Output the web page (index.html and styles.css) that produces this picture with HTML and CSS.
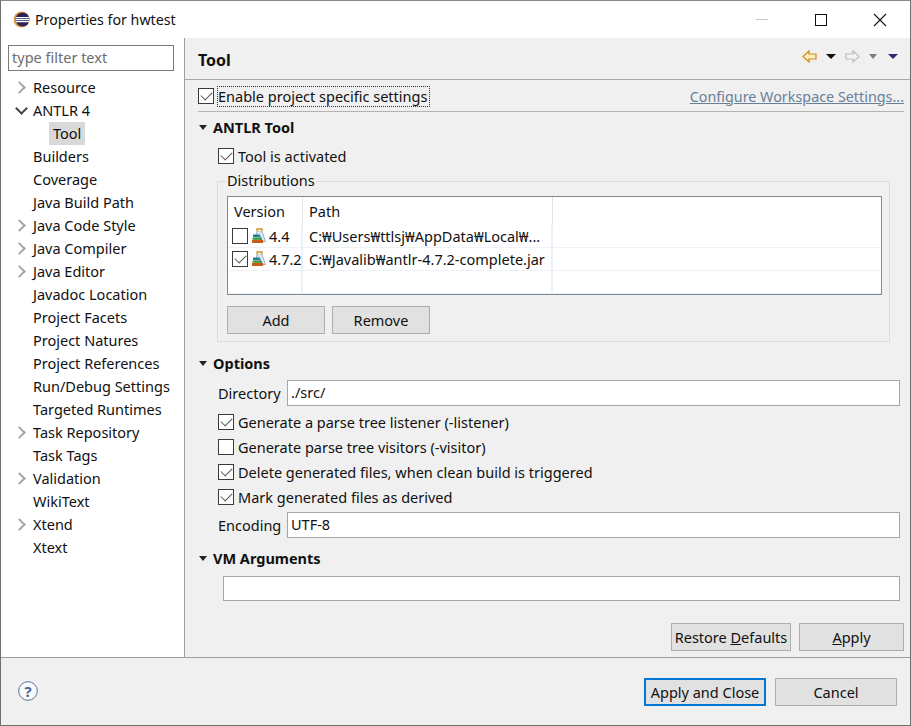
FILE: index.html
```html
<!DOCTYPE html>
<html lang="ko">
<head>
    <meta charset="UTF-8">
    <title>Properties for hwtest</title>
    <link rel="stylesheet" href="styles.css">
</head>
<body>
<div class="window">
    <!-- Title bar -->
    <div class="titlebar">
        <svg class="app-icon" width="17" height="17" viewBox="0 0 17 17">
            <circle cx="8.5" cy="8.5" r="8" fill="#e8a04c"/>
            <circle cx="9.5" cy="8.5" r="7" fill="#2c2658"/>
            <path d="M3 6.6h13M2.6 8.6h14M3 10.6h13" stroke="#fff" stroke-width="1.2"/>
        </svg>
        <span class="title-text">Properties for hwtest</span>
        <div class="win-controls">
            <span class="win-min"></span>
            <span class="win-max"></span>
            <svg class="win-close" width="14" height="14" viewBox="0 0 14 14">
                <path d="M1 1l12 12M13 1L1 13" stroke="#111" stroke-width="1.1"/>
            </svg>
        </div>
    </div>

    <div class="main">
        <!-- Left tree -->
        <aside class="sidebar">
            <div class="filter">type filter text</div>
            <ul class="tree">
                <li class="node closed">Resource</li>
                <li class="node open">ANTLR 4</li>
                <li class="child"><span class="selected">Tool</span></li>
                <li class="node">Builders</li>
                <li class="node">Coverage</li>
                <li class="node">Java Build Path</li>
                <li class="node closed">Java Code Style</li>
                <li class="node closed">Java Compiler</li>
                <li class="node closed">Java Editor</li>
                <li class="node">Javadoc Location</li>
                <li class="node">Project Facets</li>
                <li class="node">Project Natures</li>
                <li class="node">Project References</li>
                <li class="node">Run/Debug Settings</li>
                <li class="node">Targeted Runtimes</li>
                <li class="node closed">Task Repository</li>
                <li class="node">Task Tags</li>
                <li class="node closed">Validation</li>
                <li class="node">WikiText</li>
                <li class="node closed">Xtend</li>
                <li class="node">Xtext</li>
            </ul>
        </aside>

        <!-- Right page -->
        <section class="page">
            <div class="page-head">
                <h1>Tool</h1>
                <div class="nav-icons">
                    <svg width="15" height="13" viewBox="0 0 15 13"><path d="M7 1L1 6.500L7 12V9h7V4H7z" fill="#ffeeb8" stroke="#cf8a1e" stroke-width="1.200"/></svg>
                    <span class="tri"></span>
                    <svg class="nav-fwd" width="15" height="13" viewBox="0 0 15 13"><path d="M8 1l6 5.500L8 12V9H1V4h7z" fill="#f4f4f4" stroke="#bdbdbd" stroke-width="1.200"/></svg>
                    <span class="tri grey"></span>
                    <span class="tri purple"></span>
                </div>
            </div>

            <div class="project-row">
                <label class="check checked"><span class="box"></span><span class="focus">Enable project specific settings</span></label>
                <a class="link">Configure Workspace Settings...</a>
            </div>

            <div class="section-title first">ANTLR Tool</div>
            <div class="indent">
                <label class="check checked activated"><span class="box"></span>Tool is activated</label>
                <fieldset class="group">
                    <legend>Distributions</legend>
                    <div class="table">
                        <div class="cell head">Version</div>
                        <div class="cell head">Path</div>
                        <div class="cell head"></div>

                        <div class="cell ver"><span class="box"></span><svg class="lib-icon" width="15" height="16" viewBox="0 0 15 16"><use href="#books"/></svg>4.4</div>
                        <div class="cell">C:₩Users₩ttlsj₩AppData₩Local₩...</div>
                        <div class="cell"></div>

                        <div class="cell ver checked"><span class="box"></span><svg class="lib-icon" width="15" height="16" viewBox="0 0 15 16"><use href="#books"/></svg>4.7.2</div>
                        <div class="cell">C:₩Javalib₩antlr-4.7.2-complete.jar</div>
                        <div class="cell"></div>

                        <div class="cell"></div>
                        <div class="cell"></div>
                        <div class="cell"></div>
                    </div>
                    <div class="table-buttons">
                        <button class="btn">Add</button>
                        <button class="btn">Remove</button>
                    </div>
                </fieldset>
            </div>

            <div class="section-title options">Options</div>
            <div class="indent">
                <div class="field-row"><span class="field-label">Directory</span><div class="input">./src/</div></div>
                <label class="check checked opt"><span class="box"></span>Generate a parse tree listener (-listener)</label>
                <label class="check opt"><span class="box"></span>Generate parse tree visitors (-visitor)</label>
                <label class="check checked opt"><span class="box"></span>Delete generated files, when clean build is triggered</label>
                <label class="check checked opt"><span class="box"></span>Mark generated files as derived</label>
                <div class="field-row encoding"><span class="field-label">Encoding</span><div class="input">UTF-8</div></div>
            </div>

            <div class="section-title vm">VM Arguments</div>
            <div class="input vm-input"></div>

            <div class="page-buttons">
                <button class="btn restore">Restore <u>D</u>efaults</button>
                <button class="btn apply"><u>A</u>pply</button>
            </div>
        </section>
    </div>

    <!-- Bottom bar -->
    <div class="footer">
        <svg class="help" width="20" height="20" viewBox="0 0 20 20">
            <circle cx="10" cy="10" r="9.300" fill="#fafbfd" stroke="#5a7199"/>
            <text x="10" y="15.500" text-anchor="middle" class="help-mark">?</text>
        </svg>
        <div class="footer-buttons">
            <button class="btn default">Apply and Close</button>
            <button class="btn cancel">Cancel</button>
        </div>
    </div>
</div>

<!-- Library icon used in the table -->
<svg width="0" height="0" class="defs">
    <defs>
        <g id="books">
            <path d="M5 3.500h5l3.500 10H3z" fill="#dfeaf6" stroke="#8fa6bd" stroke-width=".9"/>
            <path d="M5 3.500V1h5v2.500" fill="#fff6dc" stroke="#c9952f" stroke-width="1.300"/>
            <path d="M7 5l4.500 9H8z" fill="#4f88c4"/>
            <rect x="1" y="6.500" width="6.500" height="2.500" fill="#1f7f95"/>
            <rect x="0.500" y="9.500" width="8.500" height="2.300" fill="#3f9a36"/>
            <rect x="0" y="12" width="11" height="3" fill="#c85c14"/>
        </g>
    </defs>
</svg>
</body>
</html>
```

FILE: styles.css
```css
* {
    box-sizing: border-box;
}

html, body {
    margin: 0;
    padding: 0;
}

body {
    font-family: "Noto Sans", sans-serif;
    font-size: 14.5px;
    color: #111;
    background: #f0f0f0;
}

.defs {
    position: absolute;
}

.window {
    width: 911px;
    height: 726px;
    border: 1px solid #707070;
    border-top-color: #8a8a8a;
    display: flex;
    flex-direction: column;
    overflow: hidden;
}

/* Title bar */
.titlebar {
    height: 37px;
    flex: none;
    background: #fff;
    display: flex;
    align-items: center;
    padding-left: 12px;
}

.app-icon {
    margin-right: 5px;
}

.title-text {
    font-size: 14.2px;
}

.win-controls {
    margin-left: auto;
    display: flex;
    align-items: center;
}

.win-min {
    width: 12px;
    height: 1px;
    background: #c8c8c8;
    margin-right: 47px;
}

.win-max {
    width: 12px;
    height: 12px;
    border: 1px solid #111;
    margin-right: 46px;
}

.win-close {
    margin-right: 23px;
}

.main {
    height: 620px;
    flex: none;
    display: flex;
    border-bottom: 1px solid #a0a0a0;
}

/* Left tree */
.sidebar {
    width: 184px;
    flex: none;
    background: #fff;
    border-right: 1px solid #a0a0a0;
    padding: 7px 0 0 7px;
}

.filter {
    width: 166px;
    height: 26px;
    border: 1px solid #7a7a7a;
    padding-left: 3px;
    line-height: 23px;
    color: #6d6d6d;
}

.tree {
    list-style: none;
    margin: 5px 0 0;
    padding: 0 0 0 25px;
}

.tree li {
    height: 23px;
    line-height: 23px;
    position: relative;
    white-space: nowrap;
}

.closed::before {
    content: "";
    position: absolute;
    left: -18px;
    top: 7px;
    width: 7px;
    height: 7px;
    border-top: 2px solid #a6a6a6;
    border-right: 2px solid #a6a6a6;
    transform: rotate(45deg);
}

.open::before {
    content: "";
    position: absolute;
    left: -16px;
    top: 5px;
    width: 7px;
    height: 7px;
    border-right: 2px solid #444;
    border-bottom: 2px solid #444;
    transform: rotate(45deg);
}

.child {
    padding-left: 16px;
}

.selected {
    display: inline-block;
    height: 23px;
    padding: 0 4px;
    background: #d9d9d9;
}

/* Right page */
.page {
    flex: 1;
    min-width: 0;
    padding-left: 13px;
    padding-right: 10px;
}

.page-head {
    height: 42px;
    margin-left: -13px;
    margin-right: -10px;
    padding: 3px 12px 0 13px;
    border-bottom: 1px solid #a8a8a8;
    display: flex;
    align-items: center;
    justify-content: space-between;
}

.page-head h1 {
    margin: 0;
    font-size: 16px;
    font-weight: 700;
}

.nav-icons {
    display: flex;
    align-items: center;
    margin-top: -7px;
}

.tri {
    width: 0;
    height: 0;
    margin-left: 9px;
    border-left: 5px solid transparent;
    border-right: 5px solid transparent;
    border-top: 5px solid #111;
}

.tri.grey {
    border-left-width: 4.500px;
    border-right-width: 4.500px;
    border-top-color: #7d7d7d;
}

.tri.purple {
    border-top-color: #3c2470;
    margin-left: 11px;
}

.nav-fwd {
    margin-left: 9px;
}

.project-row {
    height: 32px;
    padding-top: 1px;
    display: flex;
    align-items: center;
    justify-content: space-between;
    border-bottom: 1px solid #b4b4b4;
    margin-right: -4px;
}

.link {
    color: #6a7f98;
    font-size: 14.35px;
    text-decoration: underline;
}

.focus {
    outline: 1px dotted #333;
    line-height: 19px;
    padding-right: 2px;
}

/* Checkboxes */
.check {
    display: flex;
    align-items: center;
    white-space: nowrap;
}

.box {
    width: 16px;
    height: 16px;
    flex: none;
    border: 1px solid #3a3a3a;
    background: #fff;
    margin-right: 4px;
    position: relative;
}

.checked > .box::after {
    content: "";
    position: absolute;
    left: 2px;
    top: 2px;
    width: 10px;
    height: 6px;
    border-left: 1.500px solid #555;
    border-bottom: 1.500px solid #555;
    transform: rotate(-45deg) scale(.95);
}

/* Sections */
.section-title {
    font-weight: 700;
    height: 22px;
    line-height: 22px;
    padding-left: 15px;
    position: relative;
}

.section-title::before {
    content: "";
    position: absolute;
    left: 1px;
    top: 9px;
    width: 0;
    height: 0;
    border-left: 4.500px solid transparent;
    border-right: 4.500px solid transparent;
    border-top: 5px solid #222;
}

.section-title.first {
    margin-top: 4px;
}

.indent {
    padding-left: 20px;
}

.activated {
    height: 24px;
    margin-top: 6px;
}

/* Distributions group */
.group {
    margin: 3px 0 0 -1px;
    padding: 0 7px 8px 9px;
    height: 171px;
    width: 673px;
    border: 1px solid #dcdcdc;
    min-width: 0;
}

.group legend {
    padding: 0 1px;
    margin-left: -1px;
    height: 20px;
    line-height: 18px;
}

.table {
    margin-top: 5px;
    height: 99px;
    border: 1px solid #7f8a94;
    background: #fff;
    display: grid;
    grid-template-columns: 75px 250px 1fr;
    grid-template-rows: 28px 23px 23px 23px;
}

.cell {
    padding-left: 6px;
    display: flex;
    align-items: center;
    white-space: nowrap;
    overflow: hidden;
    border-right: 2px solid #e8f0f9;
    border-bottom: 1px solid #eef2f6;
}

.cell:nth-child(3n) {
    border-right: 0;
}

.head {
    border-bottom: 0;
    border-right: 1px solid #e2e2e2;
}

.ver {
    padding-left: 4px;
}

.ver .box {
    margin-right: 4px;
}

.lib-icon {
    margin-right: 2px;
    flex: none;
}

.table-buttons {
    display: flex;
    gap: 7px;
    margin-top: 11px;
}

/* Buttons */
.btn {
    font: inherit;
    color: #111;
    height: 28px;
    padding: 0;
    background: #e1e1e1;
    border: 1px solid #adadad;
    white-space: nowrap;
}

.table-buttons .btn {
    width: 98px;
}

.options {
    margin-top: 10px;
}

.field-row {
    display: flex;
    align-items: center;
    height: 26px;
    margin-top: 6px;
}

.field-label {
    width: 69px;
    flex: none;
}

.input {
    flex: 1;
    height: 26px;
    border: 1px solid #a5a5a5;
    background: #fff;
    padding-left: 3px;
    line-height: 23px;
}

.opt {
    height: 25px;
}

.opt:first-of-type {
    margin-top: 3px;
}

.encoding {
    margin-top: 3px;
}

.vm {
    margin-top: 9px;
}

.vm-input {
    flex: none;
    margin: 7px 0 0 25px;
    width: 677px;
    height: 25px;
}

.page-buttons {
    display: flex;
    justify-content: flex-end;
    gap: 8px;
    margin-top: 22px;
    margin-right: -4px;
}

.restore {
    width: 120px;
}

.apply {
    width: 105px;
}

/* Bottom bar */
.footer {
    flex: 1;
    display: flex;
    align-items: center;
    justify-content: space-between;
    padding: 0 13px 0 17px;
    background: #f0f0f0;
}

.help {
    margin-top: -1px;
}

.help-mark {
    font-family: "Noto Sans", sans-serif;
    font-size: 15px;
    font-weight: 700;
    fill: #4a6592;
}

.footer-buttons {
    display: flex;
    gap: 9px;
    margin-top: 1px;
}

.default {
    width: 122px;
    border: 2px solid #0078d7;
}

.cancel {
    width: 122px;
}
```
